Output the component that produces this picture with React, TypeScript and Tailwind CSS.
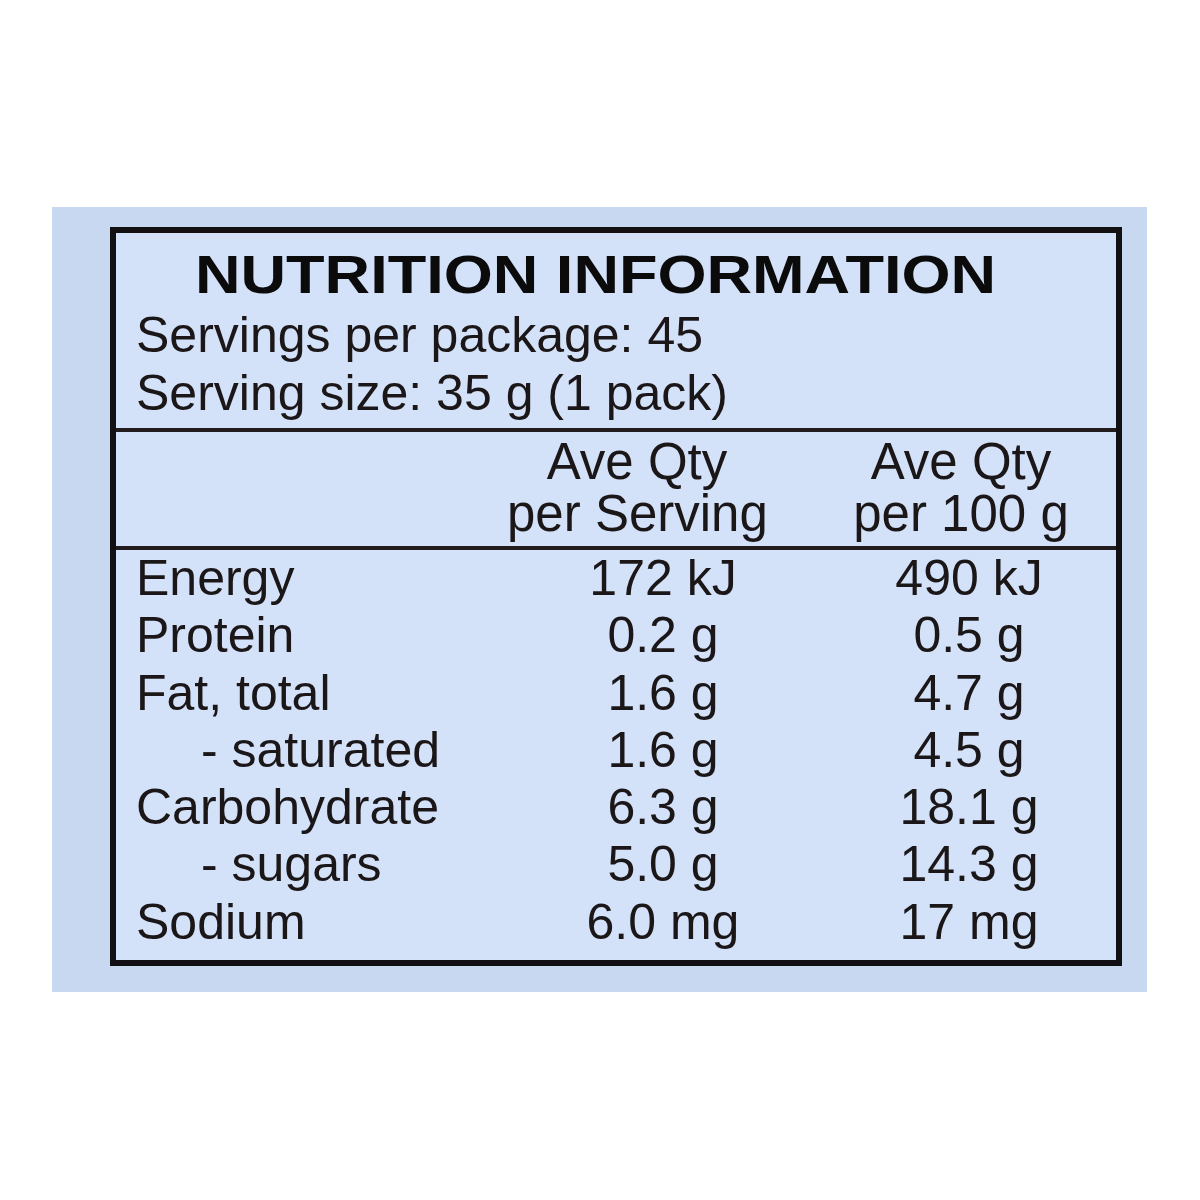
import React from 'react';

type Row = { label: string; serving: string; per100: string; sub?: boolean };

const rows: Row[] = [
  { label: 'Energy', serving: '172 kJ', per100: '490 kJ' },
  { label: 'Protein', serving: '0.2 g', per100: '0.5 g' },
  { label: 'Fat, total', serving: '1.6 g', per100: '4.7 g' },
  { label: '- saturated', serving: '1.6 g', per100: '4.5 g', sub: true },
  { label: 'Carbohydrate', serving: '6.3 g', per100: '18.1 g' },
  { label: '- sugars', serving: '5.0 g', per100: '14.3 g', sub: true },
  { label: 'Sodium', serving: '6.0 mg', per100: '17 mg' },
];

const App: React.FC = () => {
  return (
    <div className="w-[1200px] h-[1200px] bg-white pt-[207px] pl-[52px] font-['Liberation_Sans',Arial,sans-serif] text-[#1b1618]">
      {/* Label card */}
      <div className="w-[1095px] h-[785px] bg-[#c9d8f1] pt-[20px] pl-[58px]">
        <div className="w-[1012px] h-[739px] border-[6px] border-[#121012] bg-[#d3e2f8] pt-[11px]">
          <div className="pl-[79px] h-[62px] leading-[62px] text-[53px] font-bold text-[#0c0b0c] whitespace-nowrap">
            <span className="inline-block origin-left scale-x-[1.19]">NUTRITION INFORMATION</span>
          </div>
          <div className="pl-[20px] text-[50px] leading-[58px] whitespace-nowrap">
            <div>Servings per package: 45</div>
            <div>Serving size: 35 g (1 pack)</div>
          </div>

          <div className="mt-[6px] h-[4px] bg-[#221c1e]" />

          {/* Column headings */}
          <div className="pt-[4px] pl-[20px] grid grid-cols-[307px_260px_260px] gap-x-[64px] text-[51px] leading-[52px] whitespace-nowrap">
            <div />
            <div className="text-center">
              <div>Ave Qty</div>
              <div>per Serving</div>
            </div>
            <div className="text-center">
              <div>Ave Qty</div>
              <div>per 100 g</div>
            </div>
          </div>

          <div className="mt-[6px] h-[4px] bg-[#221c1e]" />

          {/* Nutrient rows */}
          <div className="pl-[20px] grid grid-cols-[350px_258px_258px] gap-x-[48px] text-[50px] leading-[57.3px] whitespace-nowrap">
            {rows.map((r) => (
              <React.Fragment key={r.label}>
                <div className={r.sub ? 'pl-[65px]' : ''}>{r.label}</div>
                <div className="text-center">{r.serving}</div>
                <div className="text-center">{r.per100}</div>
              </React.Fragment>
            ))}
          </div>
        </div>
      </div>
    </div>
  );
};

export default App;
